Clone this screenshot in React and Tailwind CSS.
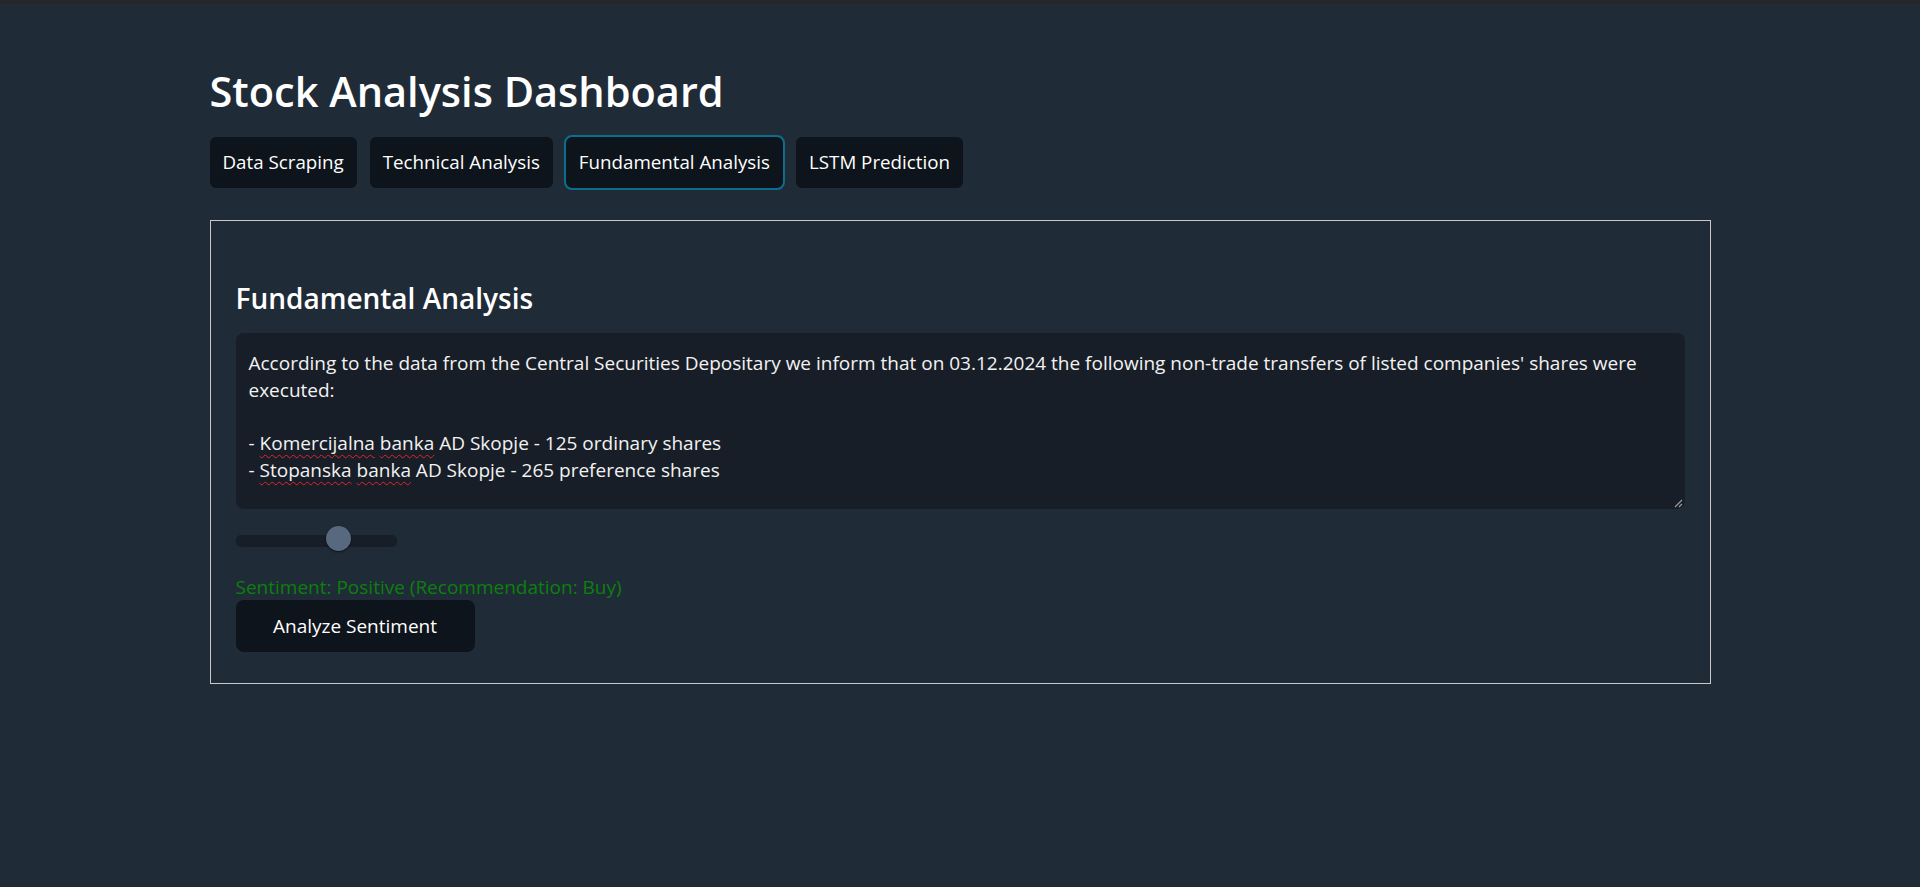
import React, { useState } from 'react';

const tabs = ['Data Scraping', 'Technical Analysis', 'Fundamental Analysis', 'LSTM Prediction'];

const Misspelled = ({ children }) => (
  <span className="underline decoration-wavy decoration-[#e0262a] decoration-1 underline-offset-[4px]">
    {children}
  </span>
);

const App = () => {
  const [active, setActive] = useState('Fundamental Analysis');

  return (
    <div className="min-h-screen bg-[#202b38] text-white font-['Open_Sans',sans-serif]">
      <div className="h-[4px] bg-[#262529]" />

      <div className="mx-auto w-[1501px]">
        <h1 className="mt-[62px] text-[41.5px] leading-[50px] font-semibold">Stock Analysis Dashboard</h1>

        <div className="mt-[21px] flex gap-[13px]">
          {tabs.map((tab) => (
            <button
              key={tab}
              onClick={() => setActive(tab)}
              className={`h-[51px] px-[13px] rounded-[6px] bg-[#0d141b] text-[18.75px] text-white ${
                active === tab ? 'outline-2 outline-[#0c6d8d]' : ''
              }`}
            >
              {tab}
            </button>
          ))}
        </div>

        <div className="mt-[32px] border border-[#c9c9c9] px-[25px] pt-[60px] pb-[31px]">
          <h2 className="text-[28px] leading-[34px] font-semibold">Fundamental Analysis</h2>

          {/* looks like a textarea, kept as a div so the spellcheck marks show */}
          <div className="relative mt-[18px] h-[176px] rounded-[8px] bg-[#181e27] pl-[13px] pt-[17px] text-[19px] leading-[26.8px] text-[#f2f2f2]">
            <div className="whitespace-nowrap">
              According to the data from the Central Securities Depositary we inform that on 03.12.2024 the following non-trade transfers of listed companies' shares were
            </div>
            <div>executed:</div>
            <div>&nbsp;</div>
            <div>
              - <Misspelled>Komercijalna</Misspelled> <Misspelled>banka</Misspelled> AD Skopje - 125 ordinary shares
            </div>
            <div>
              - <Misspelled>Stopanska</Misspelled> <Misspelled>banka</Misspelled> AD Skopje - 265 preference shares
            </div>
            <svg className="absolute right-[2px] bottom-[1px]" width="9" height="9" viewBox="0 0 9 9">
              <path d="M1 8 L8 1 M5 8 L8 5" stroke="#9a9a9a" strokeWidth="1.2" />
            </svg>
          </div>

          <div className="relative mt-[26px] h-[12px] w-[161px] rounded-[5px] bg-[#181e27]">
            <div className="absolute left-[90px] top-[-9px] h-[25px] w-[25px] rounded-full bg-[#58697f] shadow-[0_1px_2px_rgba(0,0,0,0.6)]" />
          </div>

          <p className="mt-[27px] text-[19px] leading-[26.4px] text-[#0b800b]">
            Sentiment: Positive (Recommendation: Buy)
          </p>

          <button className="h-[52px] w-[239px] rounded-[8px] bg-[#0d141b] text-[19px] text-white">
            Analyze Sentiment
          </button>
        </div>
      </div>
    </div>
  );
};

export default App;
